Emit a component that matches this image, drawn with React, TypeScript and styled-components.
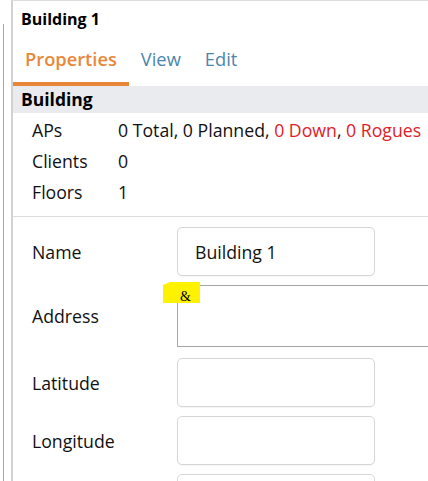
import React from 'react';
import styled, { createGlobalStyle } from 'styled-components';

const GlobalStyle = createGlobalStyle`
  html, body {
    margin: 0;
    padding: 0;
    background: #fff;
    overflow: hidden;
  }
  body {
    font-family: 'Open Sans', 'Noto Sans', sans-serif;
    color: #111;
  }
`;

interface InfoRow {
  label: string;
  value: React.ReactNode;
}

const tabs = ['Properties', 'View', 'Edit'];

const App: React.FC = () => {
  const infoRows: InfoRow[] = [
    {
      label: 'APs',
      value: (
        <>
          0 Total, 0 Planned, <Alert>0 Down</Alert>, <Alert>0 Rogues</Alert>
        </>
      ),
    },
    { label: 'Clients', value: '0' },
    { label: 'Floors', value: '1' },
  ];

  return (
    <>
      <GlobalStyle />
      <Page>
        <SideRail />
        <Panel>
          <Title>Building 1</Title>
          <TabBar>
            {tabs.map((t, i) => (
              <Tab key={t} $active={i === 0}>
                {t}
              </Tab>
            ))}
          </TabBar>
          <SectionHeader>Building</SectionHeader>
          <InfoList>
            {infoRows.map((row) => (
              <InfoItem key={row.label}>
                <InfoLabel>{row.label}</InfoLabel>
                <InfoValue>{row.value}</InfoValue>
              </InfoItem>
            ))}
          </InfoList>
          <Form>
            <FormRow>
              <FieldLabel>Name</FieldLabel>
              <TextInput defaultValue="Building 1" />
            </FormRow>
            <FormRow $extra={2}>
              <FieldLabel>Address</FieldLabel>
              <AddressWrap>
                <Highlight>&amp;</Highlight>
                <AddressBox />
              </AddressWrap>
            </FormRow>
            <FormRow>
              <FieldLabel>Latitude</FieldLabel>
              <TextInput />
            </FormRow>
            <FormRow>
              <FieldLabel>Longitude</FieldLabel>
              <TextInput />
            </FormRow>
            <FormRow>
              <FieldLabel />
              <TextInput />
            </FormRow>
          </Form>
        </Panel>
      </Page>
    </>
  );
};

const Page = styled.div`
  display: flex;
  height: 481px;
  width: 428px;
  overflow: hidden;
`;

const SideRail = styled.div`
  width: 3px;
  margin-top: 24px;
  margin-right: 7px;
  border-right: 1px solid #a8a8a8;
  flex-shrink: 0;
`;

const Panel = styled.div`
  flex: 1;
  display: flex;
  flex-direction: column;
  border-left: 2px solid #d2d2d2;
  border-top: 1px solid #dcdcdc;
  min-width: 0;
`;

const Title = styled.div`
  height: 37px;
  line-height: 37px;
  padding-left: 8px;
  font-size: 16px;
  font-weight: 700;
  color: #000;
`;

const TabBar = styled.div`
  display: flex;
  height: 48px;
`;

const Tab = styled.div<{ $active?: boolean }>`
  padding: 0 12px;
  font-size: 18.3px;
  font-weight: ${(p) => (p.$active ? 600 : 400)};
  color: ${(p) => (p.$active ? '#e8873a' : '#4b86ad')};
  line-height: 42px;
  border-bottom: 4px solid ${(p) => (p.$active ? '#e8873a' : 'transparent')};
  box-sizing: border-box;
  height: 48px;
`;

const SectionHeader = styled.div`
  height: 27px;
  line-height: 27px;
  background: #e9ebef;
  padding-left: 8px;
  font-size: 17.5px;
  font-weight: 700;
  color: #000;
`;

const InfoList = styled.div`
  padding: 2px 0 8px;
  border-bottom: 1px solid #dcdcdc;
`;

const InfoItem = styled.div`
  display: flex;
  height: 31px;
  line-height: 31px;
  font-size: 17.7px;
  white-space: nowrap;
`;

const InfoLabel = styled.div`
  width: 86px;
  padding-left: 19px;
  color: #111;
  flex-shrink: 0;
`;

const InfoValue = styled.div`
  color: #111;
`;

const Alert = styled.span`
  color: #e0202a;
`;

const Form = styled.div`
  padding-top: 10px;
  display: flex;
  flex-direction: column;
  gap: 9px;
`;

const FormRow = styled.div<{ $extra?: number }>`
  display: flex;
  align-items: center;
  margin-bottom: ${(p) => p.$extra ?? 0}px;
`;

const FieldLabel = styled.div`
  width: 145px;
  padding-left: 19px;
  font-size: 17.7px;
  color: #111;
  flex-shrink: 0;
`;

const TextInput = styled.input`
  width: 198px;
  height: 49px;
  box-sizing: border-box;
  border: 1px solid #d6d6d6;
  border-radius: 5px;
  padding: 0 17px;
  font-family: 'Open Sans', 'Noto Sans', sans-serif;
  font-size: 17.7px;
  color: #111;
  outline: none;
  background: #fff;
  box-shadow: 0 1px 1px rgba(0, 0, 0, 0.04);
`;

const AddressWrap = styled.div`
  position: relative;
  flex: 1;
  height: 62px;
`;

const AddressBox = styled.div`
  height: 62px;
  box-sizing: border-box;
  border: 1px solid #a6a6a6;
  border-right: none;
`;

const Highlight = styled.span`
  position: absolute;
  left: -14px;
  top: -3px;
  width: 37px;
  height: 21px;
  padding-left: 17px;
  box-sizing: border-box;
  background: #fff200;
  font-family: 'Liberation Serif', serif;
  font-size: 14px;
  line-height: 30px;
  color: #000;
  clip-path: polygon(0 3px, 7px 0, 100% 0, 100% 100%, 0 100%);
  z-index: 1;
`;

export default App;
